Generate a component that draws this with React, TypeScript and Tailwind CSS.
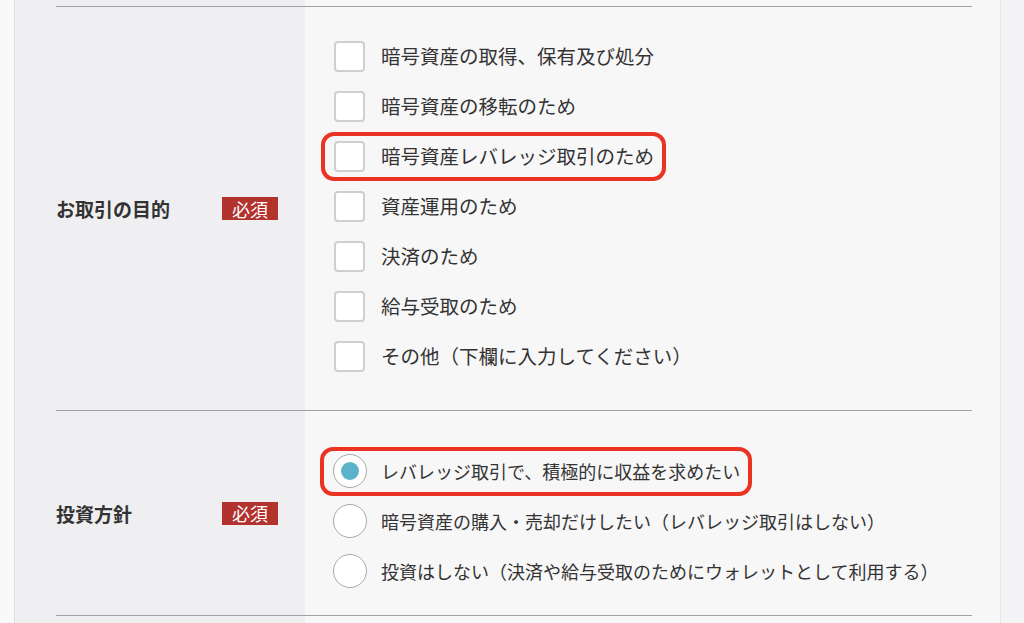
const FONT = '[font-family:"Noto_Sans_CJK_JP","Noto_Sans",sans-serif]';

const purposes = [
  '暗号資産の取得、保有及び処分',
  '暗号資産の移転のため',
  '暗号資産レバレッジ取引のため',
  '資産運用のため',
  '決済のため',
  '給与受取のため',
  'その他（下欄に入力してください）',
];

const policies = [
  'レバレッジ取引で、積極的に収益を求めたい',
  '暗号資産の購入・売却だけしたい（レバレッジ取引はしない）',
  '投資はしない（決済や給与受取のためにウォレットとして利用する）',
];

function Highlight() {
  return (
    <span className="pointer-events-none absolute -left-[13px] -right-[12px] top-[1px] bottom-[0px] rounded-[13px] border-[4px] border-[#ea3323]" />
  );
}

function Label({ text }: { text: string }) {
  return (
    <div className="flex items-center">
      <div className="w-[166px] text-[19px] font-bold text-[#333] leading-none">{text}</div>
      <span className="inline-flex h-[23px] items-center bg-[#b2322e] px-[10px] text-[18px] leading-none text-white">必須</span>
    </div>
  );
}

export default function App() {
  return (
    <div className={`${FONT} flex h-[623px] w-[1024px] overflow-hidden bg-[#f9f9f9]`}>
      <div className="w-[15px] shrink-0 border-r border-[#e2e2e4] bg-[#f9f9f9]" />

      <div className="flex-1 bg-[linear-gradient(to_right,#efeff1_290px,#f7f7f8_290px)] pl-[41px] pr-[28px] pt-[6px]">
        {/* お取引の目的 */}
        <div className="grid grid-cols-[249px_1fr] border-t border-[#a2a2a2]">
          <div className="flex items-center">
            <Label text="お取引の目的" />
          </div>
          <div className="pl-[29px] pt-[24px] pb-[29px]">
            {purposes.map((p, i) => (
              <div key={p} className="relative flex h-[50px] w-fit items-center">
                {i === 2 && <Highlight />}
                <span className="h-[31px] w-[31px] shrink-0 rounded-[4px] border-2 border-[#cfcfcf] bg-white" />
                <span className="ml-[16px] text-[19.5px] leading-none text-[#333]">{p}</span>
              </div>
            ))}
          </div>
        </div>

        {/* 投資方針 */}
        <div className="grid grid-cols-[249px_1fr] border-t border-[#a2a2a2]">
          <div className="flex items-center">
            <Label text="投資方針" />
          </div>
          <div className="pl-[28px] pt-[35px] pb-[19px]">
            {policies.map((p, i) => (
              <div key={p} className="relative flex h-[50px] w-fit items-center">
                {i === 0 && <Highlight />}
                <span className="grid h-[34px] w-[34px] shrink-0 place-items-center rounded-full border-[1.5px] border-[#a9a9a9] bg-white">
                  {i === 0 && <span className="h-[18px] w-[18px] rounded-full bg-[#5bb2c9]" />}
                </span>
                <span className="ml-[14px] text-[18px] leading-none text-[#333]">{p}</span>
              </div>
            ))}
          </div>
        </div>
        <div className="border-t border-[#a2a2a2]" />
      </div>

      <div className="w-[24px] shrink-0 border-l border-[#e6e6ea] bg-[#f4f4f7]" />
    </div>
  );
}
